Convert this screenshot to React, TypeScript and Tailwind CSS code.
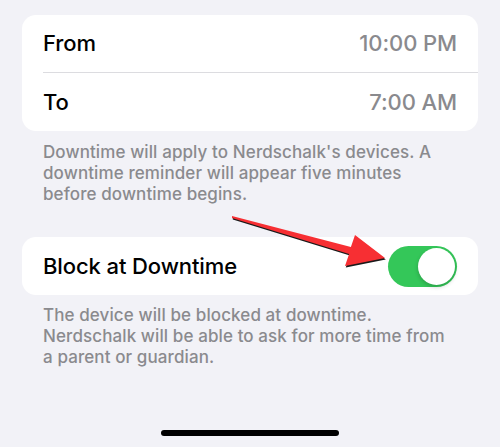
import React from 'react';

function Toggle() {
  return (
    <div className="w-[69px] h-[41px] rounded-full bg-[#34c759] p-[2px] flex justify-end">
      <div className="w-[37px] h-[37px] rounded-full bg-white shadow-[0_2px_4px_rgba(0,0,0,0.2)]" />
    </div>
  );
}

function Arrow() {
  const pts = '232,216 350.9,247.1 355,235 385,258 345,266 349.1,253.9 232,218';
  return (
    <svg className="absolute inset-0 pointer-events-none" width="500" height="447" viewBox="0 0 500 447">
      <polygon points={pts} fill="#1a1a1a" transform="translate(0.8,1.6)" />
      <polygon points={pts} fill="#f72f33" />
    </svg>
  );
}

export default function App() {
  return (
    <div
      className="relative w-[500px] h-[447px] bg-[#f2f2f7] overflow-hidden px-[22px] pt-[15px]"
      style={{ fontFamily: 'Inter, "Noto Sans", sans-serif' }}
    >
      <div className="bg-white rounded-[14px]">
        <div className="h-[57px] flex items-center justify-between px-[21px] text-[22px] font-medium tracking-[-0.1px]">
          <span className="text-black">From</span>
          <span className="text-[#8a8a8e]">10:00 PM</span>
        </div>
        <div className="ml-[21px] h-px bg-[#dcdce0]" />
        <div className="h-[58px] flex items-center justify-between px-[21px] text-[22px] font-medium tracking-[-0.1px]">
          <span className="text-black">To</span>
          <span className="text-[#8a8a8e]">7:00 AM</span>
        </div>
      </div>
      <p className="mt-[11px] px-[21px] text-[17px] font-medium leading-[21px] tracking-[0.1px] text-[#8a8a8e]">
        Downtime will apply to Nerdschalk's devices. A downtime reminder will appear five minutes before downtime begins.
      </p>

      <div className="mt-[32px] bg-white rounded-[14px] h-[58px] flex items-center justify-between px-[21px]">
        <span className="text-black text-[22px] font-medium tracking-[-0.1px]">Block at Downtime</span>
        <Toggle />
      </div>
      <p className="mt-[10px] px-[21px] text-[17px] font-medium leading-[21px] tracking-[0.1px] text-[#8a8a8e]">
        The device will be blocked at downtime. Nerdschalk will be able to ask for more time from a parent or guardian.
      </p>

      <div className="absolute left-[161px] top-[430px] w-[178px] h-[6px] rounded-full bg-black" />
      <Arrow />
    </div>
  );
}
